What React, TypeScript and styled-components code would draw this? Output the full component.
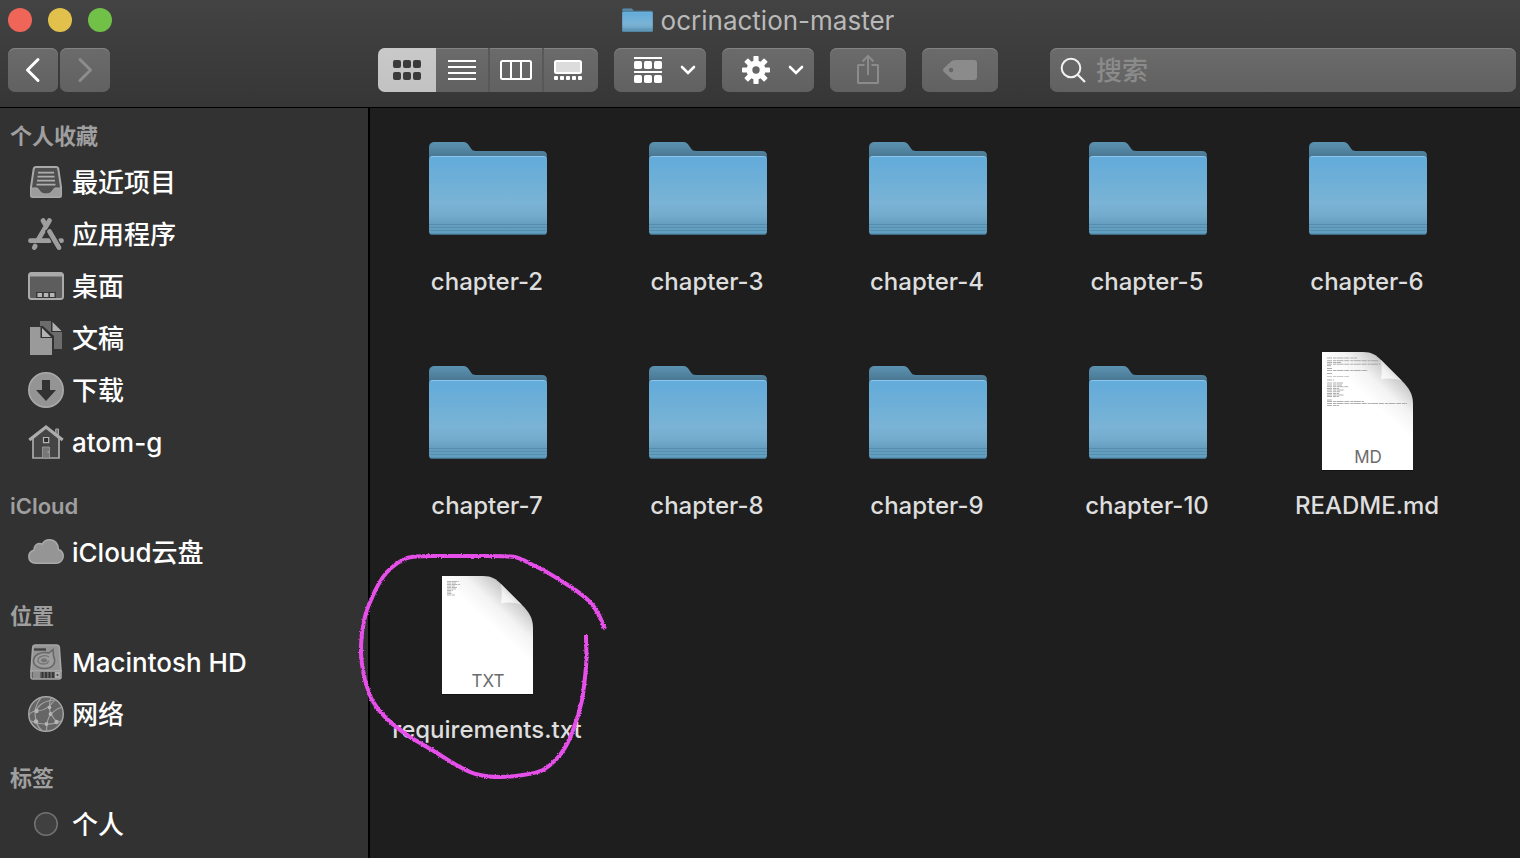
import React from "react";
import styled, { createGlobalStyle, css } from "styled-components";

const GlobalStyle = createGlobalStyle`
  * { box-sizing: border-box; }
  body {
    margin: 0;
    background: #1e1e1e;
    font-family: Inter, "Noto Sans CJK SC", sans-serif;
  }
  button, input { font: inherit; }
`;

const Window = styled.div`
  display: flex;
  flex-direction: column;
  min-height: 100vh;
  background: #1e1e1e;
`;

const Header = styled.header`
  display: flex;
  flex-direction: column;
  gap: 8px;
  padding: 0 4px 15px 8px;
  background: linear-gradient(#434343, #363636);
  border-bottom: 1px solid #000;
`;

const TitleBar = styled.div`
  display: grid;
  grid-template-columns: 1fr auto 1fr;
  align-items: center;
  height: 40px;
  padding-right: 8px;
`;

const Lights = styled.div`
  display: flex;
  gap: 16px;
`;

const Light = styled.button<{ $color: string }>`
  width: 24px;
  height: 24px;
  padding: 0;
  border: 0;
  border-radius: 50%;
  background: ${(p) => p.$color};
`;

const Title = styled.h1`
  display: flex;
  align-items: center;
  gap: 8px;
  margin: 0;
  font-size: 26px;
  line-height: 32px;
  font-weight: 400;
  color: #b9b9b9;
`;

const Name = styled.span`
  padding-top: 2px;
`;

const Toolbar = styled.div`
  display: flex;
  gap: 16px;
`;

const NavButtons = styled.div`
  display: flex;
  gap: 2px;
  margin-right: 252px;
`;

const raised = css`
  border: 0;
  background: linear-gradient(#6b6b6b, #616161);
  box-shadow: inset 0 1px 0 #828282;
`;

const ToolButton = styled.button<{ $width: number }>`
  ${raised}
  display: flex;
  align-items: center;
  justify-content: center;
  flex: none;
  width: ${(p) => p.$width}px;
  height: 44px;
  padding: 0;
  border-radius: 7px;
`;

const MenuButton = styled(ToolButton)`
  gap: 18px;
  padding-left: 10px;
`;

const Segments = styled.div`
  ${raised}
  display: flex;
  flex: none;
  height: 44px;
  border-radius: 7px;
  overflow: hidden;
`;

const Segment = styled.button<{ $active?: boolean; $divided?: boolean }>`
  display: flex;
  align-items: center;
  justify-content: center;
  width: ${(p) => (p.$active ? 58 : 54)}px;
  padding: 0;
  border: 0;
  border-right: ${(p) => (p.$divided ? "2px solid #585858" : "0")};
  background: ${(p) => (p.$active ? "linear-gradient(#c9c9c9, #c2c2c2)" : "none")};
  &:last-child { padding-right: 6px; }
`;

const SearchField = styled.label`
  ${raised}
  display: flex;
  align-items: center;
  gap: 10px;
  flex: 1;
  min-width: 0;
  height: 44px;
  margin-left: 36px;
  padding: 0 10px;
  border-radius: 7px;
`;

const SearchInput = styled.input`
  flex: 1;
  min-width: 0;
  padding: 2px 0 0;
  border: 0;
  outline: 0;
  background: none;
  color: #fff;
  font-size: 26px;
  line-height: 40px;
  font-weight: 500;
  &::placeholder { color: #8b8b8b; opacity: 1; }
`;

const Body = styled.div`
  display: flex;
  flex: 1;
`;

const Sidebar = styled.nav`
  display: flex;
  flex-direction: column;
  gap: 18px;
  flex: none;
  width: 370px;
  padding: 8px 0 8px 10px;
  background: #323232;
  border-right: 2px solid #000;
`;

const SectionTitle = styled.h2`
  margin: 0;
  font-size: 22px;
  line-height: 40px;
  font-weight: 600;
  color: #9f9f9f;
`;

const PlaceList = styled.ul`
  margin: 0;
  padding: 0;
  list-style: none;
`;

const PlaceLink = styled.a`
  display: flex;
  align-items: center;
  gap: 8px;
  height: 52px;
  padding-left: 18px;
  font-size: 26px;
  line-height: 48px;
  font-weight: 500;
  color: #fff;
  text-decoration: none;
`;

const Files = styled.main`
  display: grid;
  grid-template-columns: repeat(auto-fill, 220px);
  align-content: start;
  gap: 64px 0;
  flex: 1;
  padding: 16px 0 16px 8px;
`;

const FileItem = styled.a`
  position: relative;
  display: flex;
  flex-direction: column;
  align-items: center;
  color: #dedede;
  text-decoration: none;
`;

const FileArt = styled.div`
  display: flex;
  align-items: center;
  justify-content: center;
  height: 128px;
`;

const FileName = styled.span`
  margin-top: 14px;
  padding-right: 2px;
  font-size: 24px;
  line-height: 32px;
  height: 18px;
  font-weight: 450;
`;

const Scribble = styled.svg`
  position: absolute;
  top: -24px;
  left: -24px;
  pointer-events: none;
`;

function FolderArt({ width, height }: { width: number; height: number }) {
  return (
    <svg width={width} height={height} viewBox="0 0 120 96" preserveAspectRatio="none" aria-hidden="true">
      <defs>
        <linearGradient id="folderFront" x1="0" y1="0" x2="0" y2="1">
          <stop offset="0" stopColor="#62abda" />
          <stop offset="0.6" stopColor="#7ab3d5" />
          <stop offset="0.76" stopColor="#72abcc" />
          <stop offset="0.87" stopColor="#659dbe" />
          <stop offset="1" stopColor="#63a0c1" />
        </linearGradient>
        <linearGradient id="folderBack" x1="0" y1="0" x2="0" y2="1">
          <stop offset="0" stopColor="#5c93b2" />
          <stop offset="0.16" stopColor="#4a7893" />
          <stop offset="1" stopColor="#4a7893" />
        </linearGradient>
      </defs>
      <path d="M1 21V7.500Q1 2 7 2H34C39 2 40 4 42 7C44 10 45 11 48 11H114Q119 11 119 16V90H1Z" fill="url(#folderBack)" />
      <path d="M1 20Q1 16 5 16H115Q119 16 119 20V91Q119 94.500 116 94.500H4Q1 94.500 1 91Z" fill="url(#folderFront)" />
      <path d="M2 17.800Q3 16.500 5 16.500H115Q117 16.500 118 17.800" fill="none" stroke="#8cc6e8" />
      <path d="M1 84.500H119M1 87.500H119M1 90.500H119" stroke="#4f88a9" strokeWidth="0.700" />
      <path d="M2 94H118" stroke="#477b99" strokeWidth="0.900" />
    </svg>
  );
}

function PageArt({ kind }: { kind: "MD" | "TXT" }) {
  const long = kind === "MD";
  return (
    <svg width="92" height="120" viewBox="0 0 92 120" aria-hidden="true">
      <defs>
        <linearGradient id="curlShade" gradientUnits="userSpaceOnUse" x1="72" y1="18" x2="46" y2="46">
          <stop offset="0" stopColor="#c4c4c4" />
          <stop offset="0.28" stopColor="#dcdcdc" />
          <stop offset="0.55" stopColor="#f3f3f3" />
          <stop offset="1" stopColor="#fff" />
        </linearGradient>
        <linearGradient id="curlFlap" gradientUnits="userSpaceOnUse" x1="57" y1="30" x2="70" y2="16">
          <stop offset="0" stopColor="#fff" />
          <stop offset="0.6" stopColor="#f3f3f3" />
          <stop offset="1" stopColor="#d8d8d8" />
        </linearGradient>
      </defs>
      <path d="M0 1H41L91 52V119H0Z" fill="#000" opacity="0.4" />
      <path d="M0 0H41C50 0 54 3 59 8L80 29C87 36 91 42 91 52V118H0Z" fill="url(#curlShade)" />
      <path d="M59 8C60 15 60 21 59 27C66 26 74 26 80 29Z" fill="url(#curlFlap)" />
      {long ? (
        <g stroke="#9a9a9a" strokeWidth="0.800" strokeDasharray="5 1 3 0.500 7 0.800">
          <path d="M5 6H35M5 8.700H57M5 10.500H19M5 12.200H58M5 13.700H9M5 16.500H10M5 18.500H46M5 21.500H11M5 28H12" />
          <path d="M5 24.500H27" stroke="#bbb" />
          <path d="M5 31H21M5 33H20M5 34.700H26M5 36.500H17M5 38H22M5 39.700H18M5 41.500H17M5 43H22M5 44.500H17M5 48H10M5 49.500H42M5 51.500H85M5 53.500H17" />
        </g>
      ) : (
        <g stroke="#a5a5a5" strokeWidth="0.800" strokeDasharray="4 0.500 6 0.600">
          <path d="M5 5.500H17M5 7H14M5 8.500H18M5 10H13M5 11.500H15M5 13H14M5 14.500H11M5 16H9M5 17.500H10M5 19H13" />
        </g>
      )}
      <text x="46" y="111" textAnchor="middle" fontFamily="Inter, sans-serif" fontSize="17" fill="#6b6b6b">
        {kind}
      </text>
    </svg>
  );
}

const Chevron = () => (
  <svg width="16" height="10" viewBox="0 0 16 10" aria-hidden="true">
    <path d="M2 2L8 8L14 2" fill="none" stroke="#fff" strokeWidth="2.600" strokeLinecap="round" />
  </svg>
);

const Arrow = ({ forward }: { forward?: boolean }) => (
  <svg width="50" height="44" viewBox="0 0 50 44" fill="none" strokeWidth="3" strokeLinecap="round" strokeLinejoin="round" aria-hidden="true">
    {forward ? <path d="M20 11.500L30.500 22L20 32.500" stroke="#8d8d8d" /> : <path d="M30 11.500L19.500 22L30 32.500" stroke="#fff" />}
  </svg>
);

const GridIcon = () => (
  <svg width="28" height="20" viewBox="0 0 28 20" fill="#3a3a3a" aria-hidden="true">
    {[0, 12].map((y) => [0, 10, 20].map((x) => <rect key={`${x}-${y}`} x={x} y={y} width="8" height="8" rx="2" />))}
  </svg>
);

const ListIcon = () => (
  <svg width="28" height="20" viewBox="0 0 28 20" aria-hidden="true">
    <path d="M0 1H28M0 7H28M0 13H28M0 19H28" stroke="#fff" strokeWidth="2" />
  </svg>
);

const ColumnsIcon = () => (
  <svg width="32" height="20" viewBox="0 0 32 20" fill="none" stroke="#fff" strokeWidth="2" aria-hidden="true">
    <rect x="1" y="1" width="30" height="18" rx="1.500" />
    <path d="M11 1V19M21 1V19" />
  </svg>
);

const GalleryIcon = () => (
  <svg width="28" height="20" viewBox="0 0 28 20" aria-hidden="true">
    <rect x="1" y="1" width="26" height="12" rx="1.500" fill="#dcdcdc" stroke="#fff" strokeWidth="2" />
    {[0, 6, 12, 18, 24].map((x) => (
      <rect key={x} x={x} y="16" width="4" height="4" rx="1" fill="#fff" />
    ))}
  </svg>
);

const GroupIcon = () => (
  <svg width="28" height="26" viewBox="0 0 28 26" fill="#fff" aria-hidden="true">
    <path d="M0 0H28V2H0ZM0 14H28V16H0Z" />
    {[4, 18].map((y) => [0, 10, 20].map((x) => <rect key={`${x}-${y}`} x={x} y={y} width="8" height="8" rx="1.700" />))}
  </svg>
);

const GearIcon = () => (
  <svg width="28" height="28" viewBox="-14 -14 28 28" fill="#fff" aria-hidden="true">
    {[0, 45, 90, 135].map((a) => (
      <rect key={a} x="-2.600" y="-14" width="5.200" height="28" rx="0.800" transform={`rotate(${a})`} />
    ))}
    <circle r="9.500" />
    <circle r="3.700" fill="#666" />
  </svg>
);

const ShareIcon = () => (
  <svg width="24" height="32" viewBox="0 0 24 32" fill="none" stroke="#8b8b8b" strokeWidth="2" aria-hidden="true">
    <path d="M8.500 11H2.500Q2 11 2 11.500V28.500Q2 29 2.500 29H21.500Q22 29 22 28.500V11.500Q22 11 21.500 11H15.500" />
    <path d="M12 21V2M6.500 7.500L12 2L17.500 7.500" />
  </svg>
);

const TagIcon = () => (
  <svg width="34" height="20" viewBox="0 0 34 20" aria-hidden="true">
    <path d="M12 0H31Q34 0 34 3V17Q34 20 31 20H12Q9.500 20 7.500 18L1 12Q-1 10 1 8L7.500 2Q9.500 0 12 0Z" fill="#8b8b8b" />
    <circle cx="8" cy="10" r="2.200" fill="#666" />
  </svg>
);

const SearchIcon = () => (
  <svg width="26" height="26" viewBox="0 0 26 26" fill="none" stroke="#f2f2f2" strokeWidth="2" aria-hidden="true">
    <circle cx="11" cy="11" r="9.300" />
    <path d="M17.500 17.500L25 25" strokeWidth="2.200" />
  </svg>
);

const placeIcons = {
  recents: (
    <>
      <path d="M8 3H28Q30 3 30.300 5L33 23V31.500Q33 33 31.500 33H4.500Q3 33 3 31.500V23L5.700 5Q6 3 8 3Z" fill="#505050" stroke="#a8a8a8" strokeWidth="2" />
      <path d="M3 24H9C11 24 11 30 18 30C25 30 25 24 27 24H33V31.500Q33 33 31.500 33H4.500Q3 33 3 31.500Z" fill="#9c9c9c" stroke="#a8a8a8" />
      <path d="M10 8.700H26M9.500 12.700H26.500M9 16.700H27M8.500 20.700H27.500" stroke="#adadad" strokeWidth="1.700" />
    </>
  ),
  apps: (
    <g fill="none" stroke="#9e9e9e" strokeWidth="4.800" strokeLinecap="round">
      <path d="M2.500 24.700H21.500M32.500 24.700H33.500" />
      <path d="M21.500 4.500L10 24M7.200 30L6.300 31.600" />
      <path d="M15 4.500L17 8" />
      <path d="M20 13L31 31.600" stroke="#323232" strokeWidth="7" strokeLinecap="butt" />
      <path d="M21.500 15.500L31 31.600" />
    </g>
  ),
  desktop: (
    <>
      <rect x="1" y="5" width="34" height="26" rx="2.500" fill="#5d5d5d" stroke="#aaa" strokeWidth="2" />
      <path d="M1 6H35V8.500H1Z" fill="#aaa" />
      <path d="M8 24H28V30H8Z" fill="#383838" />
      <path d="M9.500 25H14V29H9.500ZM15.800 25H20.300V29H15.800ZM22 25H26.500V29H22Z" fill="#b5b5b5" />
    </>
  ),
  documents: (
    <>
      <path d="M12 1H23V12H34V29H12Z" fill="#6c6c6c" />
      <path d="M24.500 2V11H33.500Z" fill="#b0b0b0" />
      <path d="M1 6H15L26 16V36H1Z" fill="#323232" />
      <path d="M2 7H12.500V18H24V35H2Z" fill="#9a9a9a" />
      <path d="M14 8V17H23Z" fill="#b4b4b4" />
    </>
  ),
  downloads: (
    <>
      <circle cx="18" cy="18" r="17.200" fill="#949494" stroke="#a9a9a9" strokeWidth="1.600" />
      <path d="M14 8H22V18H28L18 29L8 18H14Z" fill="#323232" />
    </>
  ),
  home: (
    <>
      <path d="M27.700 12V5H30.500V14" fill="#777" stroke="#a8a8a8" />
      <path d="M5 14L18 3L31 14V34H5Z" fill="#454545" stroke="#ababab" strokeWidth="1.700" />
      <path d="M1.300 16L18 3L34.700 16" fill="none" stroke="#ababab" strokeWidth="3.200" />
      <path d="M15.500 13.500H20.700V18.700H15.500Z" fill="#2e2e2e" stroke="#b5b5b5" strokeWidth="1.200" />
      <path d="M14.500 23H21.500V34H14.500Z" fill="#777" stroke="#999" strokeWidth="0.900" />
      <path d="M19.500 28H21" stroke="#bbb" />
    </>
  ),
  cloud: (
    <path
      d="M8 29.300C3.500 29.300 0.800 26.500 0.800 22.500C0.800 19.300 3 17 6 16C6 12 8.500 9.500 11.500 9.500C12.500 9.500 13.500 9.800 14.200 10.300C15.500 7.500 18 5.800 21.500 5.800C27 5.800 30.500 10 30.500 15.500C33.500 16.500 35.200 19 35.200 22.200C35.200 26.300 32 29.300 28 29.300Z"
      fill="#959595"
      stroke="#a9a9a9"
      strokeWidth="1.500"
    />
  ),
  disk: (
    <>
      <path d="M7.500 1H28.500Q31 1 31.300 3.500L33 27H3L4.700 3.500Q5 1 7.500 1Z" fill="#959595" stroke="#a6a6a6" strokeWidth="1.600" />
      <path d="M6 5.500H18" stroke="#444" strokeWidth="2.400" />
      <path d="M25 5.500L21 9C13 7 5.500 11 5.500 17C5.500 21.500 10.500 24.500 16.500 24.500C23 24.500 27.500 21 26.500 15L25.500 12Z" fill="#9d9d9d" stroke="#666" strokeWidth="1.500" />
      <path d="M21 13C17 10 10 12.500 10 16.500C10 19 13 20 16 20C19 20 21 18.500 20 16.500" fill="none" stroke="#737373" strokeWidth="1.300" />
      <ellipse cx="16" cy="16.300" rx="3" ry="2" fill="#747474" />
      <path d="M3 27H33V33Q33 35 31 35H5Q3 35 3 33Z" fill="#646464" stroke="#a6a6a6" strokeWidth="1.600" />
      <path d="M5 28H12V34H5Z" fill="#8d8d8d" />
      <path d="M14.500 28V34M18 28V34M21.500 28V34M25 28V34" stroke="#333" strokeWidth="1.700" />
      <path d="M27 28H32V34H27Z" fill="#ababab" />
      <circle cx="29.500" cy="31" r="1" fill="#444" />
    </>
  ),
  network: (
    <>
      <circle cx="18" cy="18" r="17.300" fill="#666" stroke="#a8a8a8" strokeWidth="1.400" />
      <g fill="none" stroke="#a2a2a2" strokeWidth="1.200">
        <path d="M13 1.800C8 7 5.500 16 8 25C9 29 11 32 14 34.500" />
        <path d="M28 4C16 4 9 10 8.500 15.500" />
        <path d="M1 19C3 16 6 15 8.500 15C15 15 20 13 26 5" />
        <path d="M23 1.500C21 8 21 14 23 18C25 22 27 24 29 26" />
        <path d="M23 18C20 22 19 25 18.500 34.500" />
        <path d="M2.500 25C10 28 24 30 33 25" />
        <path d="M23 18C28 13 31 12 33.500 11.500" />
      </g>
      <g fill="#b5b5b5">
        <circle cx="8.500" cy="15" r="2.200" />
        <circle cx="21.500" cy="11.500" r="1.800" />
        <circle cx="22.500" cy="18" r="1.900" />
        <circle cx="8" cy="25.500" r="2.200" />
        <circle cx="18.500" cy="28" r="1.900" />
        <circle cx="28.500" cy="26" r="2.200" />
      </g>
    </>
  ),
  tag: <circle cx="18" cy="18" r="11.300" fill="#404040" stroke="#727272" strokeWidth="1.500" />,
};

type Place = { icon: keyof typeof placeIcons; name: string };

const sections: { title: string; places: Place[] }[] = [
  {
    title: "个人收藏",
    places: [
      { icon: "recents", name: "最近项目" },
      { icon: "apps", name: "应用程序" },
      { icon: "desktop", name: "桌面" },
      { icon: "documents", name: "文稿" },
      { icon: "downloads", name: "下载" },
      { icon: "home", name: "atom-g" },
    ],
  },
  { title: "iCloud", places: [{ icon: "cloud", name: "iCloud云盘" }] },
  {
    title: "位置",
    places: [
      { icon: "disk", name: "Macintosh HD" },
      { icon: "network", name: "网络" },
    ],
  },
  { title: "标签", places: [{ icon: "tag", name: "个人" }] },
];

const files: { name: string; kind: "folder" | "MD" | "TXT"; circled?: boolean }[] = [
  ...[2, 3, 4, 5, 6, 7, 8, 9, 10].map((n) => ({ name: `chapter-${n}`, kind: "folder" as const })),
  { name: "README.md", kind: "MD" },
  { name: "requirements.txt", kind: "TXT", circled: true },
];

const HandDrawnCircle = () => (
  <Scribble width="260" height="236" viewBox="354 548 260 236" aria-hidden="true">
    <filter id="crayon" x="-5%" y="-5%" width="110%" height="110%">
      <feTurbulence type="fractalNoise" baseFrequency="0.700" numOctaves="1" seed="4" />
      <feDisplacementMap in="SourceGraphic" scale="3" xChannelSelector="R" yChannelSelector="G" />
    </filter>
    <path
      d="M605 629C601 619 597 609 590 602C582 594 573 588 563 582C555 577 546 571 537 567C530 564 523 559 515 557C506 556 498 556 490 556H430C421 556 413 556 407 558C399 561 393 566 387 572C380 580 375 590 371 600C367 609 364 618 363 627C361 636 361 644 361 653C361 662 363 671 365 680C367 687 369 694 372 700C376 707 380 712 385 717C393 725 401 731 410 737L437 753C445 758 452 763 460 767C467 771 473 774 480 775C487 777 493 777 500 777C508 777 516 776 523 775C530 774 537 773 543 770C550 766 555 761 560 755C566 747 570 739 573 730C577 720 580 710 582 700C584 689 585 678 586 667C587 656 586 646 586 635"
      fill="none"
      stroke="#e750ea"
      strokeWidth="4"
      filter="url(#crayon)"
    />
  </Scribble>
);

export default function App() {
  return (
    <>
      <GlobalStyle />
      <Window>
        <Header>
          <TitleBar>
            <Lights>
              <Light $color="#ef6659" aria-label="关闭" />
              <Light $color="#e1c04c" aria-label="最小化" />
              <Light $color="#71c048" aria-label="缩放" />
            </Lights>
            <Title>
              <FolderArt width={31} height={24} />
              <Name>ocrinaction-master</Name>
            </Title>
          </TitleBar>
          <Toolbar>
            <NavButtons>
              <ToolButton $width={50} aria-label="后退"><Arrow /></ToolButton>
              <ToolButton $width={50} aria-label="前进" disabled><Arrow forward /></ToolButton>
            </NavButtons>
            <Segments>
              <Segment $active aria-label="图标"><GridIcon /></Segment>
              <Segment $divided aria-label="列表"><ListIcon /></Segment>
              <Segment $divided aria-label="分栏"><ColumnsIcon /></Segment>
              <Segment aria-label="画廊"><GalleryIcon /></Segment>
            </Segments>
            <MenuButton $width={92} aria-label="分组"><GroupIcon /><Chevron /></MenuButton>
            <MenuButton $width={92} aria-label="操作"><GearIcon /><Chevron /></MenuButton>
            <ToolButton $width={76} aria-label="共享" disabled><ShareIcon /></ToolButton>
            <ToolButton $width={76} aria-label="标签" disabled><TagIcon /></ToolButton>
            <SearchField>
              <SearchIcon />
              <SearchInput type="text" placeholder="搜索" aria-label="搜索" />
            </SearchField>
          </Toolbar>
        </Header>
        <Body>
          <Sidebar>
            {sections.map((section) => (
              <section key={section.title}>
                <SectionTitle>{section.title}</SectionTitle>
                <PlaceList>
                  {section.places.map((place) => (
                    <li key={place.name}>
                      <PlaceLink href="#">
                        <svg width="36" height="36" viewBox="0 0 36 36" aria-hidden="true">{placeIcons[place.icon]}</svg>
                        <Name>{place.name}</Name>
                      </PlaceLink>
                    </li>
                  ))}
                </PlaceList>
              </section>
            ))}
          </Sidebar>
          <Files>
            {files.map((file) => (
              <FileItem key={file.name} href="#">
                <FileArt>
                  {file.kind === "folder" ? <FolderArt width={120} height={96} /> : <PageArt kind={file.kind} />}
                </FileArt>
                <FileName>{file.name}</FileName>
                {file.circled && <HandDrawnCircle />}
              </FileItem>
            ))}
          </Files>
        </Body>
      </Window>
    </>
  );
}
